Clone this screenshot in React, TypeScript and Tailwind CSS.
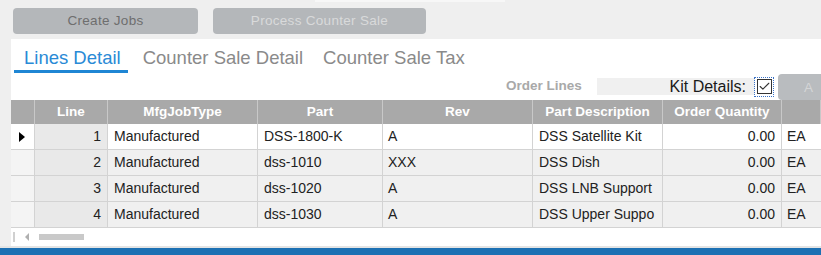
import { Check } from "lucide-react";

const rows = [
  { line: 1, type: "Manufactured", part: "DSS-1800-K", rev: "A", desc: "DSS Satellite Kit", qty: "0.00", uom: "EA" },
  { line: 2, type: "Manufactured", part: "dss-1010", rev: "XXX", desc: "DSS Dish", qty: "0.00", uom: "EA" },
  { line: 3, type: "Manufactured", part: "dss-1020", rev: "A", desc: "DSS LNB Support", qty: "0.00", uom: "EA" },
  { line: 4, type: "Manufactured", part: "dss-1030", rev: "A", desc: "DSS Upper Suppo", qty: "0.00", uom: "EA" },
];

const cols = "grid grid-cols-[24px_73px_150px_125px_150px_130px_119px_1fr]";

export default function App() {
  return (
    <div className="w-[821px] h-[255px] bg-[#efefef] overflow-hidden flex flex-col font-['Liberation_Sans',Arial,sans-serif]">
      <div className="h-[39px] flex gap-[15px] pl-[13px] pt-[8px] relative">
        <div className="absolute top-0 left-[315px] w-[190px] h-[2px] bg-[#f7f7f7]" />
        <button className="w-[185px] h-[26px] rounded-[4px] bg-[#b4b7ba] text-[13.5px] text-[#6e6e6e] tracking-[0.3px]">
          Create Jobs
        </button>
        <button className="w-[213px] h-[26px] rounded-[4px] bg-[#b4b7ba] text-[13.5px] text-[#d9dadb] tracking-[0.3px]">
          Process Counter Sale
        </button>
      </div>
      <div className="ml-[11px] bg-white h-[207px] flex flex-col">
        <div className="h-[34px] flex items-start pt-[5px] pl-[3px] text-[18.5px] text-[#8a8a8a]">
          <div className="relative pl-[10px] pr-[7px] text-[#2a8ad6] h-[29px]">
            Lines Detail
            <div className="absolute left-0 right-0 bottom-0 h-[3px] bg-[#1f86d4]" />
          </div>
          <div className="ml-[5px] px-[10px]">Counter Sale Detail</div>
          <div className="px-[10px]">Counter Sale Tax</div>
        </div>
        <div className="h-[27px] flex items-center relative">
          <div className="ml-[495px] text-[13.5px] font-bold text-[#a9a9a9] w-[91px]">Order Lines</div>
          <div className="w-[158px] h-[17px] bg-[#f0f0f0] flex items-center justify-end pr-[9px] text-[16px] text-[#1a1a1a]">
            Kit Details:
          </div>
          <div className="w-[18px] h-[18px] outline outline-1 outline-dotted outline-[#3a73c8] flex items-center justify-center">
            <div className="w-[15px] h-[15px] border border-[#333] bg-white flex items-center justify-center">
              <Check size={13} strokeWidth={2} className="text-[#333]" />
            </div>
          </div>
          <div className="absolute right-0 top-[1px] w-[43px] h-[26px] rounded-l-[4px] bg-[#b9bcbf] text-[13.5px] text-[#d4d5d6] pl-[26px] pt-[4px]">
            A
          </div>
        </div>
        <div className="flex flex-col text-[14px] text-[#222]">
          <div className={`${cols} h-[24px] bg-[#a9a9a9] text-white font-bold text-[13.5px]`}>
            <div className="border-r border-[#c8c8c8]" />
            {["Line", "MfgJobType", "Part", "Rev", "Part Description", "Order Quantity", ""].map((h, i) => (
              <div key={i} className="border-r border-[#c8c8c8] flex items-center justify-center">
                {h}
              </div>
            ))}
          </div>
          {rows.map((r, i) => {
            const bg = i === 0 ? "bg-white" : "bg-[#f0f0f0]";
            const cell = `border-r border-b border-[#d3d3d3] flex items-center ${bg}`;
            return (
              <div key={r.line} className={`${cols} h-[26px]`}>
                <div className={`border-r border-b border-[#d3d3d3] flex items-center pl-[8px] ${i === 0 ? "bg-white" : "bg-[#f4f4f4]"}`}>
                  {i === 0 && <div className="w-0 h-0 border-y-[5px] border-y-transparent border-l-[6px] border-l-black" />}
                </div>
                <div className="border-r border-b border-[#d3d3d3] bg-[#e9e9e9] flex items-center justify-end pr-[6px]">{r.line}</div>
                <div className={`${cell} pl-[6px]`}>{r.type}</div>
                <div className={`${cell} pl-[6px]`}>{r.part}</div>
                <div className={`${cell} pl-[5px]`}>{r.rev}</div>
                <div className={`${cell} pl-[6px]`}>{r.desc}</div>
                <div className={`${cell} justify-end pr-[6px]`}>{r.qty}</div>
                <div className={`border-b border-[#d3d3d3] flex items-center pl-[5px] ${bg}`}>{r.uom}</div>
              </div>
            );
          })}
        </div>
        <div className="flex items-center h-[18px] pl-[2px] gap-[10px]">
          <div className="w-[2px] h-[10px] bg-[#d0d0d0]" />
          <div className="w-0 h-0 border-y-[4px] border-y-transparent border-r-[4px] border-r-[#b0b0b0]" />
          <div className="w-[45px] h-[6px] bg-[#c9c9c9]" />
        </div>
      </div>
      <div className="h-[2px] bg-[#e4e4e4]" />
      <div className="flex-1 bg-[#1c70b3]" />
    </div>
  );
}
